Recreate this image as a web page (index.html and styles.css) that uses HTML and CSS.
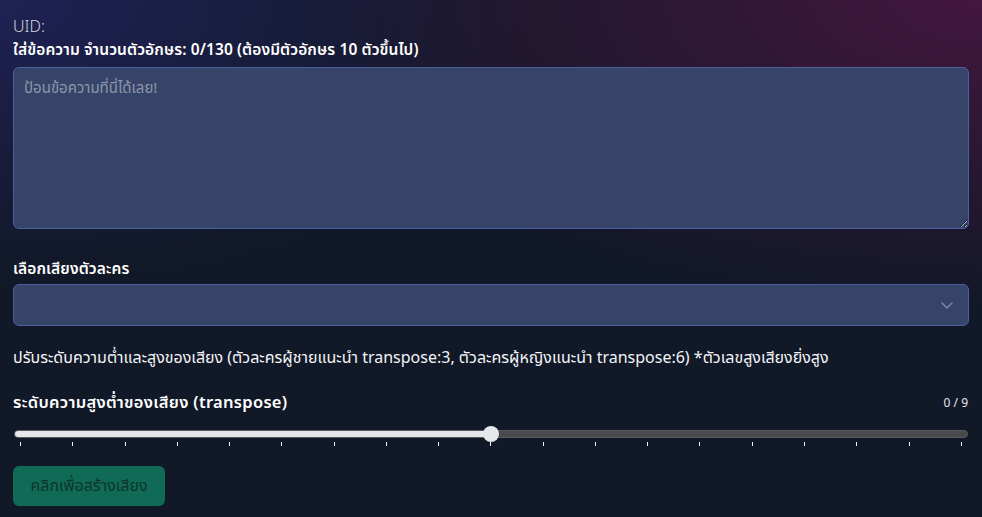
FILE: index.html
```html
<!DOCTYPE html>
<html lang="th">
<head>
<meta charset="utf-8">
<title>TTS</title>
<link rel="stylesheet" href="styles.css">
</head>
<body>
<main class="page">
  <div class="uid">UID:</div>
  <label class="label">ใส่ข้อความ จำนวนตัวอักษร: 0/130 (ต้องมีตัวอักษร 10 ตัวขึ้นไป)</label>
  <textarea class="textarea" placeholder="ป้อนข้อความที่นี่ได้เลย!"></textarea>

  <label class="label label-voice">เลือกเสียงตัวละคร</label>
  <div class="select">
    <svg class="chevron" width="14" height="10" viewBox="0 0 14 10" fill="none"><path d="M2 3l5 5 5-5" stroke="currentColor" stroke-width="1.5" stroke-linecap="round" stroke-linejoin="round"/></svg>
  </div>

  <p class="hint">ปรับระดับความต่ำและสูงของเสียง (ตัวละครผู้ชายแนะนำ transpose:3, ตัวละครผู้หญิงแนะนำ transpose:6) *ตัวเลขสูงเสียงยิ่งสูง</p>

  <div class="slider-head">
    <span class="slider-title">ระดับความสูงต่ำของเสียง (transpose)</span>
    <span class="slider-value">0 / 9</span>
  </div>
  <div class="slider">
    <div class="track"><div class="fill"></div></div>
    <div class="thumb"></div>
  </div>
  <div class="ticks">
    <i></i><i></i><i></i><i></i><i></i><i></i><i></i><i></i><i></i><i></i><i></i><i></i><i></i><i></i><i></i><i></i><i></i><i></i><i></i>
  </div>

  <button class="btn">คลิกเพื่อสร้างเสียง</button>
</main>
</body>
</html>
```

FILE: styles.css
```css
* { box-sizing: border-box; }
html, body { margin: 0; height: 100%; }
body {
  background:
    radial-gradient(ellipse 70% 60% at 100% 0%, rgba(72, 22, 66, 0.9), rgba(72, 22, 66, 0) 100%),
    radial-gradient(ellipse 55% 55% at 0% 0%, rgba(32, 34, 86, 0.95), rgba(32, 34, 86, 0) 100%),
    #111827;
  color: #f3f4f6;
  font-family: "Noto Sans", "Noto Sans Thai", "DejaVu Sans", sans-serif;
  overflow: hidden;
}
.page {
  padding: 15px 13px 0 13px;
  display: flex;
  flex-direction: column;
}
.uid {
  font-size: 16px;
  line-height: 22px;
  color: #d1d5db;
  font-weight: 300;
}
.label {
  display: block;
  font-size: 15.5px;
  font-weight: 600;
  color: #ffffff;
  line-height: 24px;
  letter-spacing: 0.1px;
}
.textarea {
  margin-top: 6px;
  width: 100%;
  height: 162px;
  background: #374469;
  border: 1px solid #4e5f9e;
  border-radius: 6px;
  padding: 9px 10px;
  font-family: inherit;
  font-size: 15px;
  color: #e5e7eb;
  resize: vertical;
  outline: none;
}
.textarea::placeholder { color: #8d95ab; }
.label-voice { margin-top: 27px; }
.select {
  margin-top: 4px;
  height: 42px;
  background: #374469;
  border: 1px solid #4e5f9e;
  border-radius: 6px;
  display: flex;
  align-items: center;
  justify-content: flex-end;
  padding-right: 14px;
}
.chevron { color: #7e87a4; }
.hint {
  margin: 19px 0 0 0;
  font-size: 16px;
  line-height: 24px;
  color: #f3f4f6;
}
.slider-head {
  margin-top: 21px;
  height: 24px;
  display: flex;
  justify-content: space-between;
  align-items: center;
}
.slider-title {
  font-size: 16.5px;
  font-weight: 600;
  color: #ffffff;
  letter-spacing: 0.3px;
}
.slider-value {
  font-size: 12px;
  color: #e5e7eb;
  padding-right: 1px;
}
.slider {
  position: relative;
  margin-top: 12px;
  height: 16px;
  display: flex;
  align-items: center;
  margin-right: 1px;
  margin-left: 1px;
}
.track {
  width: 100%;
  height: 8px;
  border-radius: 4px;
  background: #4a4a4c;
  border: 1px solid #5a5a5e;
  overflow: hidden;
}
.fill {
  width: 50%;
  height: 100%;
  background: #e5e7eb;
}
.thumb {
  position: absolute;
  left: calc(50% - 8px);
  top: 0;
  width: 16px;
  height: 16px;
  border-radius: 50%;
  background: #e5e7eb;
}
.ticks {
  display: flex;
  justify-content: space-between;
  padding: 0 7px 0 7px;
  height: 5px;
}
.ticks i {
  display: block;
  width: 1px;
  height: 4px;
  background: #f3f4f6;
}
.btn {
  align-self: flex-start;
  margin-top: 19px;
  width: 152px;
  height: 40px;
  background: #0f6b55;
  border: none;
  border-radius: 6px;
  color: #10352a;
  font-family: inherit;
  font-size: 16px;
  padding: 0;
}
```
